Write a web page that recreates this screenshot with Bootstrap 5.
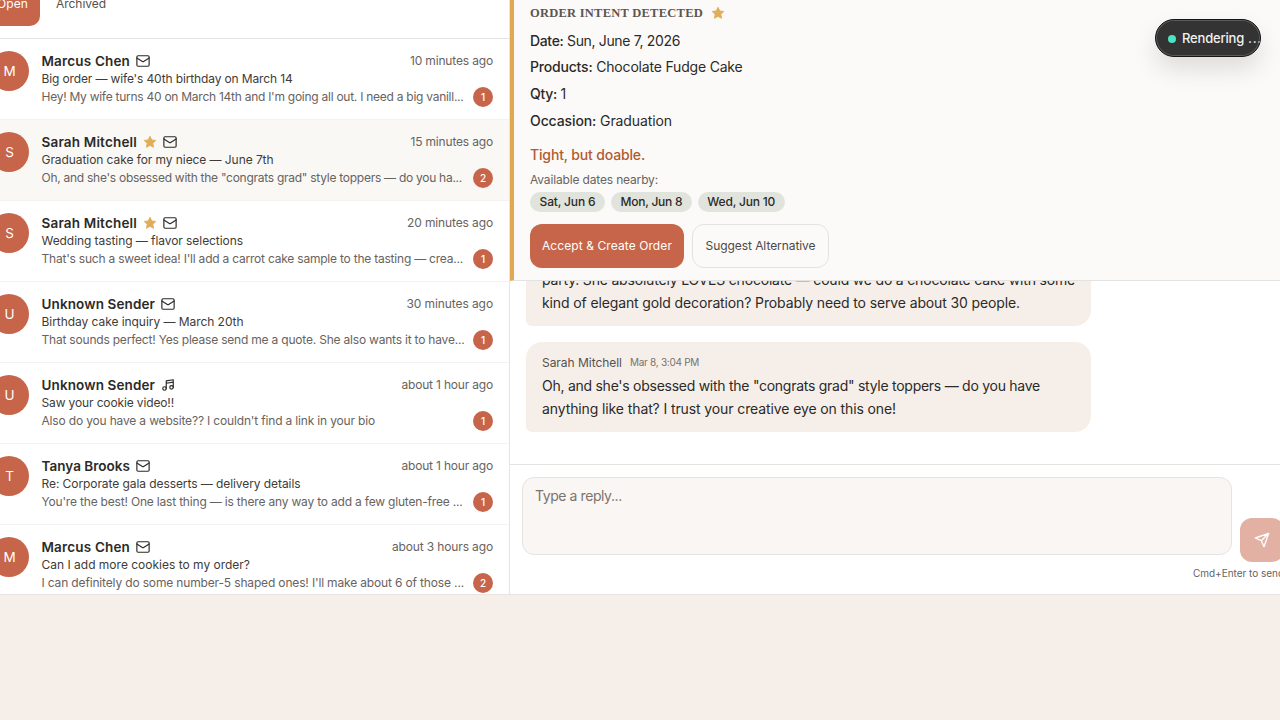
<!DOCTYPE html>
<html lang="en">
<head>
  <meta charset="UTF-8" />
  <meta name="viewport" content="width=device-width, initial-scale=1" />
  <title>Inbox</title>
  <link href="https://cdn.jsdelivr.net/npm/bootstrap@5.3.0/dist/css/bootstrap.min.css" rel="stylesheet" />
  <style>
    body { background: #f6eee8; color: #2b2a28; font-family: "Inter", sans-serif; font-size: 14px; height: 720px; overflow: hidden; }
    [data-w] { white-space: nowrap; }
    .shell { width: 1323px; height: 595px; margin-left: -27px; background: #fff; border-bottom: 1px solid #e7e4e2; }
    .inbox { width: 537px; border-right: 1px solid #e5e5e5; }
    .tabs { height: 39px; border-bottom: 1px solid #e3e3e1; }
    .tab { height: 44px; padding: 0 12px; margin-top: -18px; font-size: 12px; border-radius: 10px; color: #55524e; }
    .tab-on { width: 67px; background: #c66549; color: #fff; }
    .thread { height: 81px; padding: 12px 16px; gap: 12.5px; border-bottom: 1px solid #f3f2f0; }
    .thread-on { background: #faf8f5; }
    .avatar { width: 40px; height: 40px; padding-left: 1px; background: #c66549; color: #fff; font-size: 13.5px; }
    .who { height: 20px; margin-bottom: -1px; font-size: 13.5px; line-height: 18px; font-weight: 600; }
    .who > span:first-child { margin-top: -1px; }
    .when { font-size: 12px; font-weight: 400; color: #67635f; }
    .subject { height: 17px; line-height: 17px; font-size: 12px; color: #3e3b38; }
    .preview { height: 20px; font-size: 12px; color: #67635f; }
    .count { width: 20px; height: 20px; background: #c66549; color: #fff; font-size: 10px; font-weight: 500; }
    .intent { height: 281px; padding: 0 16px 12px; background: #fcfaf8; border-left: 4px solid #e0a951; border-bottom: 1px solid #e3e3e1; }
    .intent-title { height: 18px; margin-bottom: 7.5px; font-family: "Liberation Serif", serif; font-size: 12.5px; font-weight: 700; color: #5b5650; }
    .fact { height: 26.75px; line-height: 22.75px; }
    .fact b, .warn { font-weight: 500; }
    .warn { height: 22px; line-height: 21px; margin-top: 7px; color: #b05a30; }
    .nearby { height: 16px; line-height: 16px; margin: 6.5px 0 4px; font-size: 12px; color: #67635f; }
    .day { height: 20px; padding: 0 9.6px; border-radius: 10px; background: #e1e4dd; font-size: 12px; font-weight: 500; }
    .act { height: 44px; border-radius: 12px; font-size: 12px; padding: 0; }
    .act-main, .act-main:hover { width: 154px; background: #c66549; color: #fff; }
    .act-alt { width: 137px; border: 1px solid #e5e3e1; color: #4c4945; }
    .messages { height: 183px; padding: 0 16px 32px; overflow: hidden; }
    .bubble { width: 565px; padding: 12px 16px; border-radius: 16px 16px 16px 6px; background: #f6efe9; line-height: 23px; flex: none; }
    .bubble-head { height: 17px; line-height: 17px; margin-bottom: 3px; font-size: 12px; color: #55524e; }
    .bubble-head small { font-size: 10px; color: #77726d; }
    .composer { height: 130px; padding: 12px; border-top: 1px solid #e3e3e1; }
    .reply { width: 710px; height: 78px; margin-bottom: 7px; padding: 7px 12px; resize: none; border: 1px solid #e5e3e3; border-radius: 12px; background: #faf6f3; font-size: 14px; letter-spacing: -.42px; }
    .reply::placeholder { color: #7a7470; }
    .send, .send:hover { width: 44px; height: 44px; padding: 0; border-radius: 12px; background: #e2b1a4; color: #fff; }
    .hint { height: 24px; line-height: 23px; font-size: 10px; color: #67635f; }
    .status { position: absolute; left: 1155px; top: 19px; width: 106px; height: 38px; padding: 1px 0 0 12px; border: 1px solid #151515; border-radius: 19px; background: #333; box-shadow: inset 0 0 0 1px #5b5b5b, 0 12px 24px rgba(0, 0, 0, .12); color: #f1f1f1; font-size: 13px; font-weight: 500; overflow: hidden; }
    .status-dot { width: 8px; height: 8px; margin-right: 6px; background: #4de3c2; flex: none; }
  </style>
</head>
<body>
  <svg class="d-none">
    <symbol id="mail" viewBox="0 0 24 24"><rect x="1.5" y="3" width="21" height="18" rx="2" /><path d="M1.5 7l9.4 5.7a2 2 0 0 0 2.2 0L22.5 7" /></symbol>
    <symbol id="music" viewBox="0 0 24 24"><path d="M9 18V5l12-2v13M9 9l12-2" /><circle cx="6" cy="18" r="3" /><circle cx="18" cy="16" r="3" /></symbol>
    <symbol id="star" viewBox="0 0 24 24"><path d="M12 2.3l3 6.2 6.9.9-5.1 4.8 1.3 6.9-6.1-3.4-6.1 3.4 1.3-6.9-5.1-4.8 6.9-.9z" fill="#e0ad59" stroke="#e0ad59" stroke-width="1.6" stroke-linejoin="round" /></symbol>
    <symbol id="plane" viewBox="0 0 24 24"><path d="M22 2L15 22l-4-9-9-4zM22 2L11 13" /></symbol>
  </svg>

  <div class="shell d-flex overflow-hidden">
    <div class="inbox flex-shrink-0 overflow-hidden">
      <div class="tabs d-flex">
        <div class="tab tab-on d-flex align-items-center justify-content-end"><span data-w="31">Open</span></div>
        <div class="tab d-flex align-items-center ms-1"><span data-w="50">Archived</span></div>
      </div>
      <div id="threads"></div>
    </div>

    <div class="flex-grow-1 d-flex flex-column">
      <section class="intent d-flex flex-column justify-content-end">
        <div class="intent-title d-flex align-items-center gap-2"><span data-w="173">ORDER INTENT DETECTED</span><svg width="14" height="14"><use href="#star" /></svg></div>
        <div class="fact"><span data-w="150"><b>Date:</b> Sun, June 7, 2026</span></div>
        <div class="fact"><span data-w="212.5"><b>Products:</b> Chocolate Fudge Cake</span></div>
        <div class="fact"><span data-w="36"><b>Qty:</b> 1</span></div>
        <div class="fact"><span data-w="142"><b>Occasion:</b> Graduation</span></div>
        <div class="warn"><span data-w="115">Tight, but doable.</span></div>
        <div class="nearby"><span data-w="128">Available dates nearby:</span></div>
        <div class="d-flex mb-2 pb-1" style="gap: 6px">
          <span class="day d-flex align-items-center"><span data-w="55.8">Sat, Jun 6</span></span>
          <span class="day d-flex align-items-center"><span data-w="61.6">Mon, Jun 8</span></span>
          <span class="day d-flex align-items-center"><span data-w="67.6">Wed, Jun 10</span></span>
        </div>
        <div class="d-flex gap-2">
          <button class="btn act act-main"><span data-w="130">Accept &amp; Create Order</span></button>
          <button class="btn act act-alt"><span data-w="110">Suggest Alternative</span></button>
        </div>
      </section>

      <section class="messages d-flex flex-column justify-content-end gap-3">
        <div class="bubble">
          <div><span data-w="533">party. She absolutely LOVES chocolate — could we do a chocolate cake with some</span></div>
          <div><span data-w="478">kind of elegant gold decoration? Probably need to serve about 30 people.</span></div>
        </div>
        <div class="bubble">
          <div class="bubble-head d-flex gap-2"><span data-w="80">Sarah Mitchell</span><small class="pt-0" data-w="69">Mar 8, 3:04 PM</small></div>
          <div><span data-w="498">Oh, and she's obsessed with the "congrats grad" style toppers — do you have</span></div>
          <div><span data-w="354">anything like that? I trust your creative eye on this one!</span></div>
        </div>
      </section>

      <section class="composer">
        <div class="d-flex align-items-end gap-2">
          <textarea class="reply form-control" placeholder="Type a reply..."></textarea>
          <button class="send btn d-flex align-items-center justify-content-center flex-shrink-0"><svg width="16" height="16" fill="none" stroke="currentColor" stroke-width="2" stroke-linejoin="round"><use href="#plane" /></svg></button>
        </div>
        <div class="hint text-end"><span data-w="91">Cmd+Enter to send</span></div>
      </section>
    </div>
  </div>

  <div class="status d-flex align-items-center text-nowrap"><span class="status-dot rounded-circle"></span><span data-w="62">Rendering</span><span class="ms-1" data-w="14">...</span></div>

  <script>
    // name, icon, starred, time, subject, preview, unread, then the text widths
    const threads = [
      ['Marcus Chen', 'mail', 0, '10 minutes ago', "Big order — wife's 40th birthday on March 14", "Hey! My wife turns 40 on March 14th and I'm going all out. I need a big vanill...", 1, [88.5, 83, 251, 422]],
      ['Sarah Mitchell', 'mail', 1, '15 minutes ago', 'Graduation cake for my niece — June 7th', 'Oh, and she\'s obsessed with the "congrats grad" style toppers — do you ha...', 2, [95.5, 82.5, 232, 420.5]],
      ['Sarah Mitchell', 'mail', 1, '20 minutes ago', 'Wedding tasting — flavor selections', "That's such a sweet idea! I'll add a carrot cake sample to the tasting — crea...", 1, [95.5, 86, 201.5, 421.5]],
      ['Unknown Sender', 'mail', 0, '30 minutes ago', 'Birthday cake inquiry — March 20th', 'That sounds perfect! Yes please send me a quote. She also wants it to have...', 1, [113.5, 86.5, 202, 423]],
      ['Unknown Sender', 'music', 0, 'about 1 hour ago', 'Saw your cookie video!!', "Also do you have a website?? I couldn't find a link in your bio", 1, [113.5, 91.5, 132.5, 333.5]],
      ['Tanya Brooks', 'mail', 0, 'about 1 hour ago', 'Re: Corporate gala desserts — delivery details', "You're the best! One last thing — is there any way to add a few gluten-free ...", 1, [88.5, 91.5, 259, 421]],
      ['Marcus Chen', 'mail', 0, 'about 3 hours ago', 'Can I add more cookies to my order?', "I can definitely do some number-5 shaped ones! I'll make about 6 of those ...", 2, [88.5, 101, 208.5, 422.5]]
    ];

    document.getElementById('threads').innerHTML = threads.map(([name, icon, star, time, subject, preview, unread, w], i) => `
      <div class="thread d-flex ${i === 1 ? 'thread-on' : ''}">
        <div class="avatar rounded-circle d-flex align-items-center justify-content-center flex-shrink-0">${name[0]}</div>
        <div class="flex-grow-1">
          <div class="who d-flex align-items-center">
            <span data-w="${w[0]}">${name}</span>
            ${star ? '<svg class="ms-1" width="18" height="14"><use href="#star" /></svg>' : ''}
            <svg class="${star ? '' : 'ms-1'}" width="${star ? 22 : 18}" height="14" fill="none" stroke="currentColor" stroke-width="2" stroke-linecap="round" stroke-linejoin="round"><use href="#${icon}" /></svg>
            <span class="when ms-auto" data-w="${w[1]}">${time}</span>
          </div>
          <div class="subject"><span data-w="${w[2]}">${subject}</span></div>
          <div class="preview d-flex align-items-center justify-content-between">
            <span data-w="${w[3]}">${preview}</span>
            <span class="count rounded-circle d-flex align-items-center justify-content-center">${unread}</span>
          </div>
        </div>
      </div>`).join('');

    // track each line so that it takes its set width
    document.querySelectorAll('[data-w]').forEach(el => {
      const range = document.createRange();
      range.selectNodeContents(el);
      const gap = el.dataset.w - range.getBoundingClientRect().width;
      el.style.letterSpacing = gap / el.textContent.length + 'px';
    });
  </script>
  <script src="https://cdn.jsdelivr.net/npm/bootstrap@5.3.0/dist/js/bootstrap.bundle.min.js"></script>
</body>
</html>
